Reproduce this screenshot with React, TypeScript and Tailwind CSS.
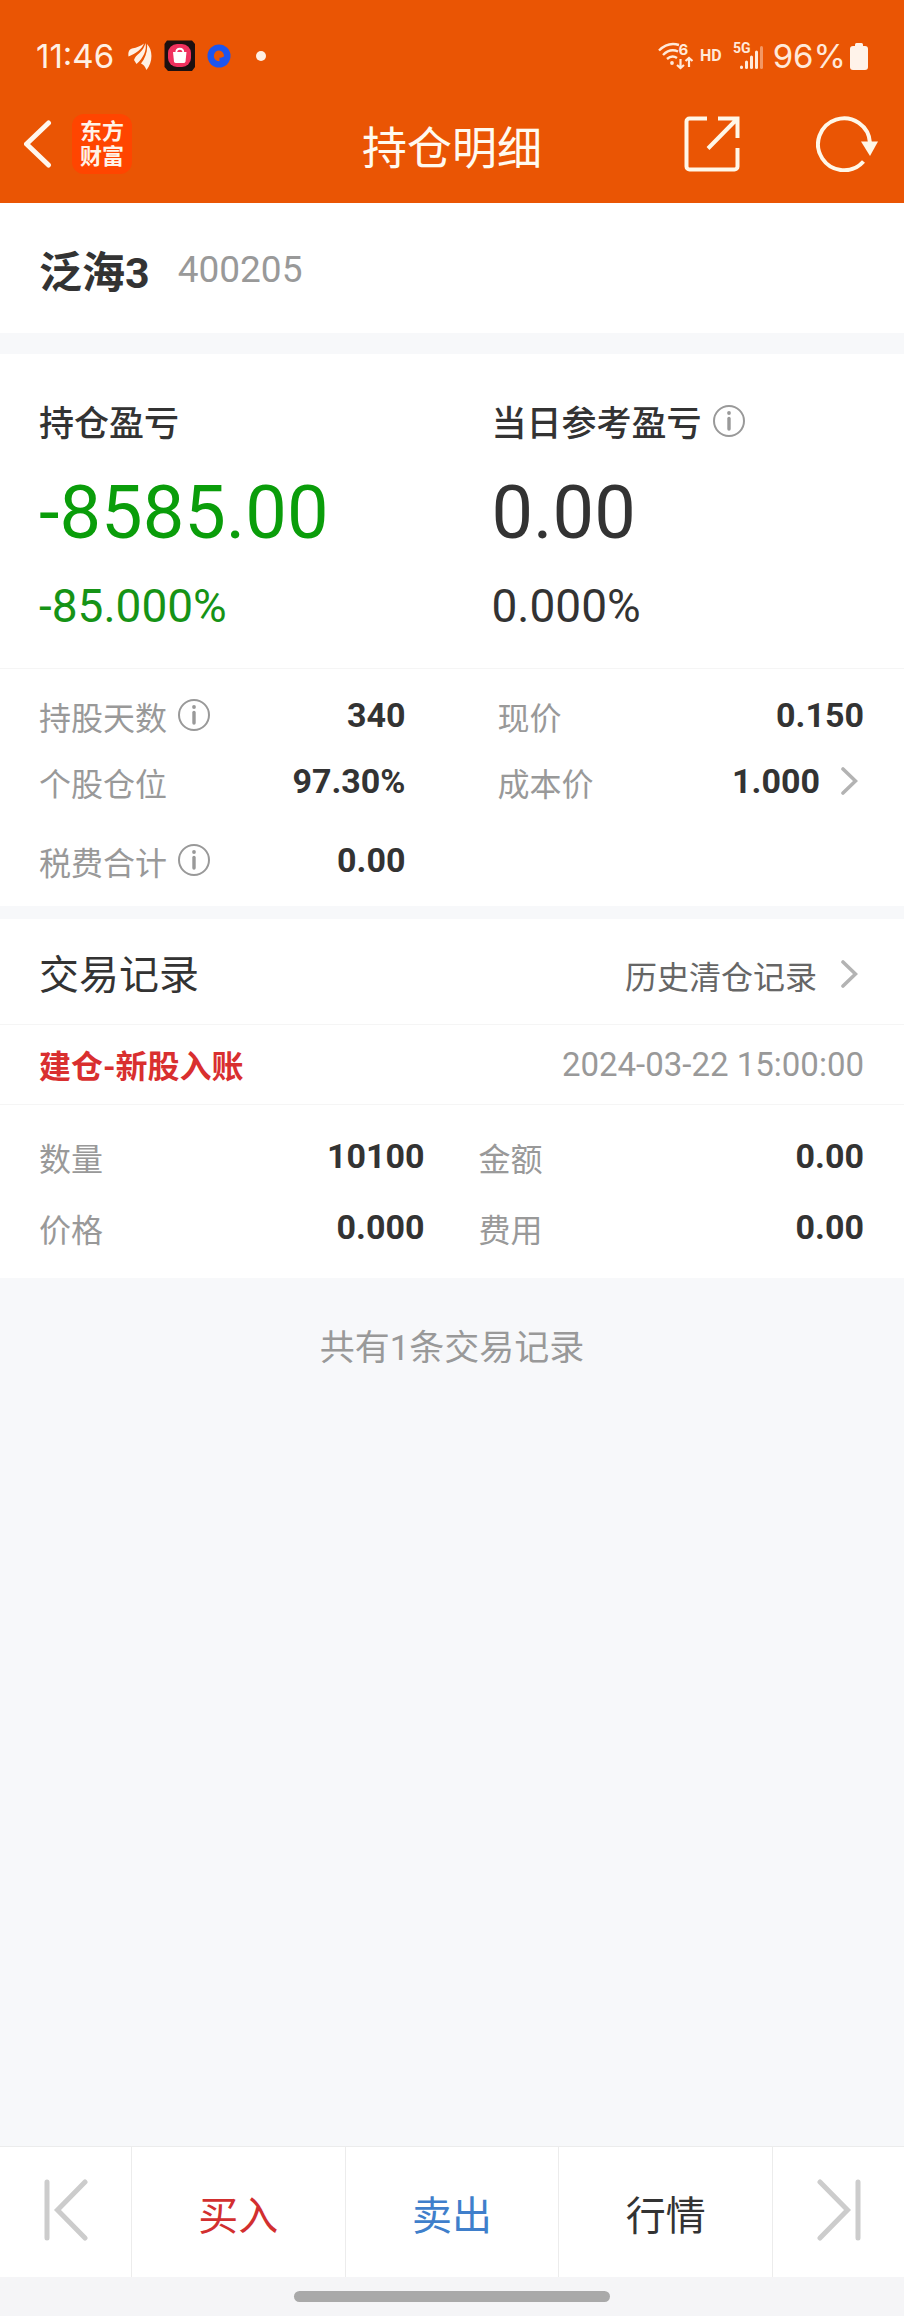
import React from "react";

const RECORD = [
  { label: "数量", value: "10100" },
  { label: "金额", value: "0.00" },
  { label: "价格", value: "0.000" },
  { label: "费用", value: "0.00" },
];

function InfoIcon() {
  return (
    <svg viewBox="0 0 32 32" className="size-8 shrink-0" fill="none" stroke="#999999" aria-hidden="true">
      <circle cx="16" cy="16" r="15" strokeWidth="2" />
      <path d="M16 13.5v10.500" strokeWidth="3.4" strokeLinecap="round" />
      <circle cx="16" cy="8" r="1.9" fill="#999999" stroke="none" />
    </svg>
  );
}

function Chevron() {
  return (
    <svg viewBox="0 0 18 30" className="mr-1.5 h-[30px] w-[18px] shrink-0" fill="none" stroke="#b3b3b3" strokeWidth="3.6" strokeLinecap="round" aria-hidden="true">
      <path d="M3 3l12.500 12L3 27" />
    </svg>
  );
}

function StepIcon({ flip }: { flip?: boolean }) {
  return (
    <svg viewBox="0 0 44 62" className={flip ? "h-[62px] w-11 -scale-x-100" : "h-[62px] w-11"} fill="none" stroke="#cccccc" strokeWidth="5" strokeLinecap="round" aria-hidden="true">
      <path d="M3 3v56M41 3L13.500 31L41 59" />
    </svg>
  );
}

function StatusBar() {
  return (
    <div className="flex h-20 items-end justify-between px-9 font-[Inter,sans-serif]">
      <div className="flex h-12 items-center text-[#fff0e4]">
        <span className="w-[92px] text-[33px] leading-8">11:46</span>
        <svg viewBox="0 0 24 27" className="h-[27px] w-6" fill="#fff0e4" aria-hidden="true">
          <path d="M0.500 13.500C0 9 1 6.500 4 5.500C9 4.500 13 3 16 0.500C14 6 8 10.500 0.500 13.500Z" />
          <path d="M6 17C7 14 8.500 12.500 11.500 10C14.500 7 16.500 4 17.500 0C19 7 15.500 15 8.500 21Z" />
          <path d="M18.500 27C17 23.500 15.500 21.500 13 20.500C17.500 15 19.800 8 19 1C25 7 25 19 18.500 27Z" />
        </svg>
        <svg viewBox="0 0 32 32" className="ml-3 size-8" aria-hidden="true">
          <path d="M3 0.500H28L31 4V27L28 31H4L0.500 27V4Z" fill="#1c1010" />
          <rect x="4" y="4" width="23" height="23" rx="9" fill="#f0315f" />
          <path d="M9 12h13.500l-1 9.500q-0.300 1.500-2 1.500h-7.500q-1.700 0-2-1.500z" fill="#fff" />
          <path d="M12.300 12.500c0-5 7-5 7 0" fill="none" stroke="#fff" strokeWidth="1.800" />
        </svg>
        <svg viewBox="0 0 24 24" className="ml-[11px] size-6" aria-hidden="true">
          <circle cx="12" cy="12" r="11.500" fill="#1c55f0" />
          <path d="M12 6.500a5.500 5.500 0 0 0-3 9.800q1.500 1 3.500 1v-3.500h1.500l3-1.300A5.500 5.500 0 0 0 12 6.500z" fill="#ea5504" />
        </svg>
        <span className="ml-[25px] size-[10px] rounded-full bg-[#fff0e4]" />
      </div>
      <div className="flex h-12 items-center text-[#ffe9da]">
        <svg viewBox="0 -6 36 40" className="h-10 w-9" fill="none" stroke="#ffe9da" strokeWidth="2.400" aria-hidden="true">
          <path d="M1 8.500Q10 -0.500 21 3" />
          <path d="M5 13Q12 6 20 9.500" />
          <path d="M9 17Q14 12.500 19 16" />
          <circle cx="14" cy="21" r="1.900" fill="#ffe9da" stroke="none" />
          <path d="M22.500 17v9M19 23l3.500 3l3.500-3M31 25v-9M27.500 19l3.500-3l3.500 3" strokeWidth="2.200" />
          <text x="20.500" y="12.500" fontSize="15" fontWeight="700" fill="#ffe9da" stroke="none">6</text>
        </svg>
        <span className="ml-1.5 font-[Roboto,sans-serif] text-base font-bold leading-5">HD</span>
        <svg viewBox="0 -6 32 40" className="ml-[11px] h-10 w-8" fill="#ffe9da" aria-hidden="true">
          <text x="0" y="11" fontSize="14" fontWeight="700" fontFamily="Roboto, sans-serif">5G</text>
          <rect x="7" y="23.500" width="3" height="3.500" rx="1.500" />
          <rect x="12" y="18.500" width="3" height="8.500" rx="1.500" />
          <rect x="17" y="13.500" width="3" height="13.500" rx="1.500" />
          <rect x="22" y="8.500" width="3" height="18.500" rx="1.500" />
          <rect x="27" y="4" width="3" height="23" rx="1.500" opacity="0.450" />
        </svg>
        <span className="ml-2 text-[33px] leading-8">96%</span>
        <svg viewBox="0 0 18 27" className="ml-1 h-[27px] w-[18px]" fill="#fff3ea" aria-hidden="true">
          <rect x="5" y="0" width="8" height="6" rx="1.500" />
          <rect x="0" y="3" width="18" height="24" rx="3" />
        </svg>
      </div>
    </div>
  );
}

function NavBar() {
  return (
    <div className="grid h-[123px] grid-cols-3 items-center px-6 pt-1">
      <div className="flex items-center gap-5">
        <button type="button" aria-label="返回">
          <svg viewBox="0 0 28 50" className="h-[50px] w-7" fill="none" stroke="#fff7ee" strokeWidth="5" strokeLinecap="round" aria-hidden="true">
            <path d="M24.500 4L2.500 25L24.500 46" />
          </svg>
        </button>
        <div className="flex size-[60px] flex-col items-center justify-center rounded-xl bg-[#ff4500] text-[22px] font-bold leading-[25px] text-[#fff3e8]">
          <span>东方</span>
          <span>财富</span>
        </div>
      </div>
      <h1 className="pt-3 text-center text-[45px] leading-[60px] text-[#fffaf0]">持仓明细</h1>
      <div className="flex items-center justify-end gap-[76px]">
        <button type="button" aria-label="分享">
          <svg viewBox="0 0 56 56" className="size-14" fill="none" stroke="#fff7e8" strokeWidth="4" aria-hidden="true">
            <path d="M23 2.500H5.500a3 3 0 0 0-3 3v45a3 3 0 0 0 3 3H50.500a3 3 0 0 0 3-3V32" />
            <path d="M34 2.500H53.500V22M53 3L24 32.500" />
          </svg>
        </button>
        <button type="button" aria-label="刷新">
          <svg viewBox="0 0 64 56" className="h-14 w-16" fill="none" stroke="#fff7e8" strokeWidth="4" aria-hidden="true">
            <path d="M47.500 45.500A26 26 0 1 1 54 27" />
            <path d="M45 25.500h17L54 40z" fill="#fff7e8" stroke="none" />
          </svg>
        </button>
      </div>
    </div>
  );
}

function Pair({ label, value, info, arrow }: { label: string; value: string; info?: boolean; arrow?: boolean }) {
  return (
    <div className="flex items-center justify-between">
      <dt className="flex items-center gap-[11px] text-[32px] leading-10 text-[#999999]">
        <span className="pt-2">{label}</span>
        {info ? <InfoIcon /> : null}
      </dt>
      <dd className="flex items-center gap-5 text-[34px] font-bold leading-10">
        {value}
        {arrow ? <Chevron /> : null}
      </dd>
    </div>
  );
}

export default function App() {
  return (
    <div className="flex min-h-screen flex-col bg-[#f7f8fa] font-[Roboto,'Noto_Sans_CJK_SC',sans-serif] text-[#333333]">
      <header className="bg-[#ea5504]">
        <StatusBar />
        <NavBar />
      </header>

      <main className="flex grow flex-col">
        <section className="flex h-[130px] items-center gap-7 bg-white pl-[39px] pr-10 pt-1">
          <h2 className="pt-1.5 text-[43px] font-bold leading-[60px]">泛海3</h2>
          <span className="text-[37px] leading-[60px] text-[#999999]">400205</span>
        </section>

        <section className="mt-[21px] bg-white">
          <div className="grid grid-cols-2 border-b border-[#f5f5f5] pb-[34px] pl-[39px] pr-10 pt-[39px]">
            <div>
              <h3 className="pt-2 text-[35px] font-medium leading-12">持仓盈亏</h3>
              <p className="mt-5 text-[74px] leading-[88px] text-[#0a9d0a]">-8585.00</p>
              <p className="mt-[21px] text-[46px] leading-14 text-[#169316]">-85.000%</p>
            </div>
            <div className="pl-10">
              <h3 className="flex items-center gap-[11px] text-[35px] font-medium leading-12">
                <span className="pt-2">当日参考盈亏</span>
                <InfoIcon />
              </h3>
              <p className="mt-5 text-[74px] leading-[88px]">0.00</p>
              <p className="mt-[21px] text-[46px] leading-14">0.000%</p>
            </div>
          </div>
          <div className="grid grid-cols-2 pb-[22px] pl-[39px] pr-10 pt-[22px]">
            <dl className="flex flex-col pr-[46px]">
              <Pair label="持股天数" value="340" info />
              <div className="mt-[18px]"><Pair label="个股仓位" value="97.30%" /></div>
              <div className="mt-[31px]"><Pair label="税费合计" value="0.00" info /></div>
            </dl>
            <dl className="flex flex-col pl-[46px]">
              <Pair label="现价" value="0.150" />
              <div className="mt-[18px]"><Pair label="成本价" value="1.000" arrow /></div>
            </dl>
          </div>
        </section>

        <section className="mt-[13px] bg-white">
          <div className="flex h-[106px] items-center justify-between border-b border-[#f5f5f5] pl-[39px] pr-10 pt-1">
            <h2 className="pt-1 text-[40px] leading-[60px]">交易记录</h2>
            <a href="#history" className="flex items-center gap-[23px] text-[32px] leading-10 text-[#666666]">
              <span className="pt-2">历史清仓记录</span>
              <Chevron />
            </a>
          </div>
          <div className="flex h-20 items-center justify-between border-b border-[#f5f5f5] pl-[39px] pr-10">
            <h3 className="pt-1 text-[32px] font-bold leading-10 text-[#d92f2f]">建仓-新股入账</h3>
            <time className="text-[33px] leading-10 text-[#999999]">2024-03-22 15:00:00</time>
          </div>
          <dl className="grid grid-cols-2 gap-x-[54px] gap-y-[23px] pb-[27px] pl-[39px] pr-10 pt-[27px]">
            {RECORD.map((it) => (
              <Pair key={it.label} label={it.label} value={it.value} />
            ))}
          </dl>
        </section>

        <p className="pt-[47px] text-center text-[35px] leading-12 text-[#999999]">共有1条交易记录</p>
      </main>

      <nav className="flex h-[131px] border-t border-[#ececec] bg-white text-[40px] leading-[60px]">
        <button type="button" aria-label="上一个" className="flex w-[132px] items-center justify-center border-r border-[#ececec] pb-1">
          <StepIcon />
        </button>
        <button type="button" className="grow basis-0 border-r border-[#ececec] pt-2.5 text-[#d22f2f]">买入</button>
        <button type="button" className="grow basis-0 border-r border-[#ececec] pt-2.5 text-[#3f7fcb]">卖出</button>
        <button type="button" className="grow basis-0 border-r border-[#ececec] pt-2.5">行情</button>
        <button type="button" aria-label="下一个" className="flex w-[131px] items-center justify-center pb-1">
          <StepIcon flip />
        </button>
      </nav>
      <div className="flex h-[39px] justify-center bg-[#f5f5f7] pt-[14px]">
        <span className="h-[11px] w-[316px] rounded-full bg-[#a9a9a9]" />
      </div>
    </div>
  );
}
